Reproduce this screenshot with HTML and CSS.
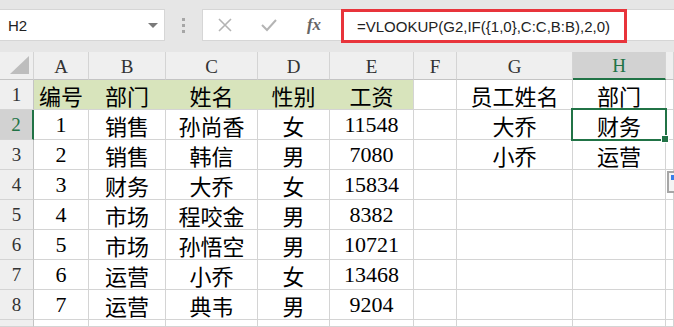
FILE: index.html
```html
<!DOCTYPE html>
<html lang="zh-CN">

<head>
    <meta charset="UTF-8">
    <meta name="viewport" content="width=device-width, initial-scale=1.0">
    <title>VLOOKUP 反向查找</title>
    <link rel="stylesheet" href="styles.css">
</head>

<body>
    <!-- formula bar -->
    <div class="toolbar">
        <div class="name-box">
            <span>H2</span>
            <span class="drop"></span>
        </div>
        <div class="grip">
            <i></i><i></i><i></i>
        </div>
        <div class="formula-box">
            <span class="fbtn">
                <svg width="16" height="16" viewBox="0 0 16 16">
                    <path d="M2 2 L14 14 M14 2 L2 14" stroke="#b4b4b4" stroke-width="1.6" fill="none" />
                </svg>
            </span>
            <span class="fbtn">
                <svg width="18" height="16" viewBox="0 0 18 16">
                    <path d="M2 8 L7 13 L16 3" stroke="#b4b4b4" stroke-width="2" fill="none" />
                </svg>
            </span>
            <span class="fbtn fx">fx</span>
            <span class="formula">=VLOOKUP(G2,IF({1,0},C:C,B:B),2,0)</span>
        </div>
    </div>

    <!-- sheet -->
    <div class="sheet">
        <div class="corner">
            <svg width="20" height="19" viewBox="0 0 20 19">
                <polygon points="19,0 19,18 0,18" fill="#bdbdbd" />
            </svg>
        </div>
        <div class="ch">A</div>
        <div class="ch">B</div>
        <div class="ch">C</div>
        <div class="ch">D</div>
        <div class="ch">E</div>
        <div class="ch">F</div>
        <div class="ch">G</div>
        <div class="ch active-col">H</div>
        <div class="ch"></div>

        <div class="rh">1</div>
        <div class="c fill">编号</div>
        <div class="c fill">部门</div>
        <div class="c fill">姓名</div>
        <div class="c fill">性别</div>
        <div class="c fill last">工资</div>
        <div class="c"></div>
        <div class="c">员工姓名</div>
        <div class="c">部门</div>
        <div class="c"></div>

        <div class="rh active-row">2</div>
        <div class="c">1</div>
        <div class="c">销售</div>
        <div class="c">孙尚香</div>
        <div class="c">女</div>
        <div class="c">11548</div>
        <div class="c"></div>
        <div class="c">大乔</div>
        <div class="c selected">财务<span class="handle"></span></div>
        <div class="c"></div>

        <div class="rh">3</div>
        <div class="c">2</div>
        <div class="c">销售</div>
        <div class="c">韩信</div>
        <div class="c">男</div>
        <div class="c">7080</div>
        <div class="c"></div>
        <div class="c">小乔</div>
        <div class="c">运营</div>
        <div class="c"></div>

        <div class="rh">4</div>
        <div class="c">3</div>
        <div class="c">财务</div>
        <div class="c">大乔</div>
        <div class="c">女</div>
        <div class="c">15834</div>
        <div class="c"></div>
        <div class="c"></div>
        <div class="c"></div>
        <div class="c"></div>

        <div class="rh">5</div>
        <div class="c">4</div>
        <div class="c">市场</div>
        <div class="c">程咬金</div>
        <div class="c">男</div>
        <div class="c">8382</div>
        <div class="c"></div>
        <div class="c"></div>
        <div class="c"></div>
        <div class="c"></div>

        <div class="rh">6</div>
        <div class="c">5</div>
        <div class="c">市场</div>
        <div class="c">孙悟空</div>
        <div class="c">男</div>
        <div class="c">10721</div>
        <div class="c"></div>
        <div class="c"></div>
        <div class="c"></div>
        <div class="c"></div>

        <div class="rh">7</div>
        <div class="c">6</div>
        <div class="c">运营</div>
        <div class="c">小乔</div>
        <div class="c">女</div>
        <div class="c">13468</div>
        <div class="c"></div>
        <div class="c"></div>
        <div class="c"></div>
        <div class="c"></div>

        <div class="rh">8</div>
        <div class="c">7</div>
        <div class="c">运营</div>
        <div class="c">典韦</div>
        <div class="c">男</div>
        <div class="c">9204</div>
        <div class="c"></div>
        <div class="c"></div>
        <div class="c"></div>
        <div class="c"></div>

        <!-- top sliver of row 9 -->
        <div class="rh"></div>
        <div class="c"></div>
        <div class="c"></div>
        <div class="c"></div>
        <div class="c"></div>
        <div class="c"></div>
        <div class="c"></div>
        <div class="c"></div>
        <div class="c"></div>
        <div class="c"></div>
    </div>

    <!-- paste options button -->
    <div class="paste-opt"><i></i></div>
</body>

</html>
```

FILE: styles.css
```css
/* General */
body {
    margin: 0;
    width: 674px;
    height: 327px;
    overflow: hidden;
    position: relative;
    background: #fff;
    font-family: "Liberation Serif", "Noto Sans CJK SC", serif;
}

/* Formula bar */
.toolbar {
    height: 52px;
    background: #e6e6e6;
    display: flex;
    align-items: flex-start;
    padding-top: 9px;
    box-sizing: border-box;
}

.name-box {
    width: 165px;
    height: 32px;
    box-sizing: border-box;
    background: #fff;
    border: 1px solid #d6d6d6;
    border-left: none;
    display: flex;
    align-items: center;
    justify-content: space-between;
    padding: 0 6px 0 8px;
    font-family: "Liberation Sans", Arial, sans-serif;
    font-size: 15px;
    color: #222;
}

.drop {
    width: 0;
    height: 0;
    border-left: 5px solid transparent;
    border-right: 5px solid transparent;
    border-top: 5px solid #7a7a7a;
}

.grip {
    width: 37px;
    height: 32px;
    display: flex;
    flex-direction: column;
    align-items: center;
    justify-content: center;
    gap: 3px;
}

.grip i {
    width: 3px;
    height: 3px;
    background: #a6a6a6;
}

.formula-box {
    flex: 1;
    height: 32px;
    box-sizing: border-box;
    background: #fff;
    border: 1px solid #d6d6d6;
    border-right: none;
    display: flex;
    align-items: flex-start;
}

.fbtn {
    height: 30px;
    display: flex;
    align-items: center;
    justify-content: center;
    width: 44px;
}

.fx {
    font-family: "Liberation Serif", serif;
    font-style: italic;
    font-weight: bold;
    font-size: 17px;
    color: #666;
    width: 46px;
}

.formula {
    margin-top: -1px;
    margin-left: 4px;
    width: 286px;
    height: 34px;
    box-sizing: border-box;
    border: 3px solid #e8343b;
    padding-left: 13px;
    display: flex;
    align-items: center;
    font-family: "Liberation Sans", Arial, sans-serif;
    font-size: 15px;
    color: #222;
}

/* Sheet grid */
.sheet {
    display: grid;
    grid-template-columns: 34px 55px 77px 92px 72px 84px 43px 116px 93px 1fr;
    grid-template-rows: 28px repeat(8, 30px) 7px;
    overflow: hidden;
}

.sheet > div {
    box-sizing: border-box;
    border-right: 1px solid #d4d4d4;
    border-bottom: 1px solid #d4d4d4;
    display: flex;
    align-items: center;
    justify-content: center;
    min-height: 0;
}

.corner {
    background: #efefef;
    align-items: flex-end !important;
    justify-content: flex-end !important;
    padding: 0 3px 4px 0;
}

.ch {
    background: #efefef;
    font-size: 19px;
    color: #333;
    padding-top: 2px;
}

.sheet > .ch,
.sheet > .corner {
    border-bottom-color: #c4c4c4;
}

.rh {
    background: #efefef;
    font-size: 19px;
    color: #333;
}

.sheet > .rh {
    border-right-color: #c4c4c4;
}

.c {
    font-size: 22px;
    color: #000;
}

.fill {
    background: #d8e4bc;
}

.sheet > .fill {
    border-right-color: #d8e4bc;
}

.sheet > .fill.last {
    border-right-color: #d4d4d4;
}

/* Active cell markers */
.sheet > .active-col {
    background: #d2d2d2;
    color: #217346;
    border-bottom: 2px solid #217346;
}

.sheet > .active-row {
    background: #d2d2d2;
    color: #217346;
    border-right: 2px solid #217346;
}

.selected {
    position: relative;
}

.selected::before {
    content: "";
    position: absolute;
    left: -2px;
    top: -2px;
    right: -2px;
    bottom: -2px;
    border: 2px solid #217346;
}

.handle {
    position: absolute;
    right: -4px;
    bottom: -4px;
    width: 6px;
    height: 6px;
    background: #217346;
    border: 1px solid #fff;
    z-index: 2;
}

.paste-opt {
    position: absolute;
    left: 667px;
    top: 171px;
    width: 14px;
    height: 22px;
    box-sizing: border-box;
    border: 2px solid #a6a6a6;
    background: #f4f4f4;
}

.paste-opt i {
    display: block;
    margin: 2px 0 0 2px;
    width: 8px;
    height: 5px;
    background: #3a7ee8;
}
```
